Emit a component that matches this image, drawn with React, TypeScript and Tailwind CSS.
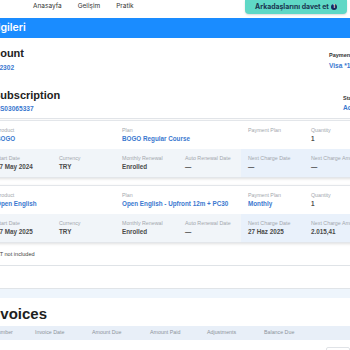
import React from "react";

const sans = { fontFamily: '"Liberation Sans", Arial, sans-serif' };
const pop = { fontFamily: 'Inter, "Open Sans", sans-serif' };

function Cell({ label, value, blue, span2, right }: { label: string; value: string; blue?: boolean; span2?: boolean; right?: boolean }) {
  return (
    <div className={`${span2 ? "col-span-2" : ""} ${right ? "bg-[#e9f1fb]" : ""} pl-[7px] pt-[5px] h-[28px]`}>
      <div className="text-[5.3px] leading-[8px] text-[#a3a7ad] whitespace-nowrap">{label}</div>
      <div className={`text-[6.3px] leading-[10px] font-bold whitespace-nowrap ${blue ? "text-[#3a78cf]" : "text-[#4a4a4a]"}`}>{value}</div>
    </div>
  );
}

function Card({ product, plan, pplan, qty, start, cur, renew, auto, ncd, nca }: any) {
  return (
    <div className="-ml-[12px] w-[400px] shrink-0 border border-[#e3e6ea] rounded-[2px] shadow-[0_1px_3px_rgba(0,0,0,0.12)] bg-white">
      <div className="grid grid-cols-[repeat(6,63px)]">
        <Cell label="Product" value={product} blue span2 />
        <Cell label="Plan" value={plan} blue span2 />
        <Cell label="Payment Plan" value={pplan} blue />
        <Cell label="Quantity" value={qty} />
      </div>
      <div className="grid grid-cols-[repeat(6,63px)] bg-[#f1f5f9]">
        <Cell label="Start Date" value={start} />
        <Cell label="Currency" value={cur} />
        <Cell label="Monthly Renewal" value={renew} />
        <Cell label="Auto Renewal Date" value={auto} />
        <Cell label="Next Charge Date" value={ncd} right />
        <Cell label="Next Charge Amount" value={nca} right />
      </div>
    </div>
  );
}

export default function App() {
  return (
    <div className="w-[350px] h-[350px] overflow-hidden bg-white relative" style={sans}>
      {/* Nav */}
      <div className="h-[18px] flex items-start" style={pop}>
        <div className="flex gap-[16px] pl-[33px] h-[14px] items-center text-[6.5px] text-[#333]">
          <span>Anasayfa</span>
          <span>Gelişim</span>
          <span>Pratik</span>
        </div>
        <div className="ml-auto mr-[3px] w-[102px] h-[14px] rounded-b-[4px] bg-[#5fd8c6] shadow-[0_1px_2px_rgba(0,0,0,0.15)] flex items-center justify-center gap-[2px] text-[6.9px] font-bold text-[#1b3550]">
          <span>Arkadaşlarını davet et</span>
          <span className="w-[6px] h-[6px] rounded-full bg-[#1a2a5c] text-white text-[4.5px] leading-[6px] text-center font-bold">1</span>
        </div>
      </div>
      {/* Blue bar */}
      <div className="h-[20px] bg-[#1a8cff] flex items-center" style={pop}>
        <span className="-ml-[12px] text-white text-[10.5px] font-semibold whitespace-nowrap">Bilgileri</span>
      </div>
      {/* Account */}
      <div className="pt-[8px] flex -ml-[20px]">
        <div className="w-[349px] shrink-0">
          <div className="text-[11px] leading-[14px] font-bold text-[#222]">Account</div>
          <div className="mt-[3px] text-[6.6px] leading-[10px] font-bold text-[#3a78cf]">A00012302</div>
        </div>
        <div className="shrink-0 pt-[5px] whitespace-nowrap">
          <div className="text-[5.5px] leading-[8px] font-bold text-[#333]">Payment Method</div>
          <div className="mt-[2px] text-[6.6px] leading-[10px] font-bold text-[#3a78cf]">Visa *1111</div>
        </div>
      </div>
      {/* Subscription */}
      <div className="border-b border-[#e2e5e9] pb-[4px]">
        <div className="mt-[15px] flex -ml-[7px]">
          <div className="w-[350px] shrink-0">
            <div className="text-[11px] leading-[14px] font-bold text-[#222]">Subscription</div>
            <div className="mt-[2px] text-[6.6px] leading-[10px] font-bold text-[#3a78cf]">A-S03065337</div>
          </div>
          <div className="shrink-0 pt-[6px] whitespace-nowrap">
            <div className="text-[5.5px] leading-[8px] font-bold text-[#333]">Status</div>
            <div className="mt-[1px] text-[6.6px] leading-[10px] font-bold text-[#3a78cf]">Active</div>
          </div>
        </div>
      </div>
      {/* Cards */}
      <div className="mt-[1px] flex flex-col gap-[7px]">
        <Card product="BOGO" plan="BOGO Regular Course" pplan="" qty="1" start="27 May 2024" cur="TRY" renew="Enrolled" auto="—" ncd="—" nca="—" />
        <Card product="Open English" plan="Open English - Upfront 12m + PC30" pplan="Monthly" qty="1" start="27 May 2025" cur="TRY" renew="Enrolled" auto="—" ncd="27 Haz 2025" nca="2.015,41" />
      </div>
      <div className="h-[23px] border-b border-[#dfe3e7] flex items-center">
        <span className="-ml-[7px] text-[5.6px] text-[#444] whitespace-nowrap">VAT not included</span>
      </div>
      <div className="h-[22px]" />
      <div className="h-[10px] border-t border-[#e0e4e8] bg-[#eef5fc]" />
      {/* Invoices */}
      <div className="mt-[6px] h-[20px] flex items-center">
        <span className="-ml-[13px] text-[15px] font-bold text-[#1e1e1e] whitespace-nowrap">Invoices</span>
      </div>
      <div className="mt-[2px] h-[14px] bg-[#e8eff8] flex items-center text-[5.3px] text-[#8d939b] whitespace-nowrap">
        <div className="-ml-[6px] w-[41px] shrink-0">Number</div>
        <div className="w-[57px] shrink-0">Invoice Date</div>
        <div className="w-[58px] shrink-0">Amount Due</div>
        <div className="w-[57px] shrink-0">Amount Paid</div>
        <div className="w-[57px] shrink-0">Adjustments</div>
        <div className="w-[57px] shrink-0">Balance Due</div>
      </div>
      <div className="flex justify-end pt-[7px]">
        <div className="w-[24px] h-[10px] border border-[#e0e3e7] rounded-[2px] bg-white" />
      </div>
    </div>
  );
}
